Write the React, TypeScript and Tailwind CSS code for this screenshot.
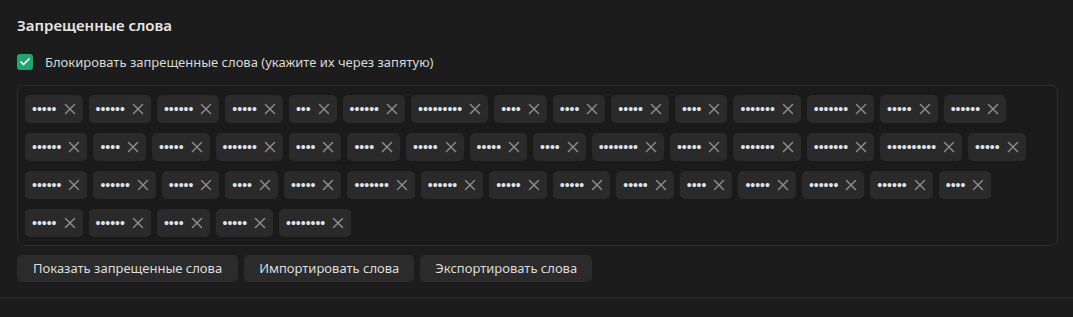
import { X, Check } from "lucide-react";

const rows: number[][] = [
  [5, 6, 6, 5, 3, 6, 9, 4, 4, 5, 4, 7, 7, 5, 6],
  [6, 4, 5, 7, 4, 4, 5, 5, 4, 8, 5, 7, 7, 10, 5],
  [6, 6, 5, 4, 5, 7, 6, 5, 5, 5, 4, 5, 6, 6, 4],
  [5, 6, 4, 5, 8],
];

function WordChip({ length }: { length: number }) {
  return (
    <div className="h-[28px] flex items-center gap-[8px] pl-[7px] pr-[8px] rounded-[5px] bg-[#2a2a2a]">
      <span className="text-[14px] leading-none text-[#dde3ee] font-['Liberation_Sans',sans-serif]">
        {"•".repeat(length)}
      </span>
      <X size={18} strokeWidth={2} className="text-[#8a8a8a] -mx-[4px]" />
    </div>
  );
}

export default function App() {
  return (
    <div className="w-[1073px] h-[317px] bg-[#1c1c1c] font-['Noto_Sans',sans-serif] text-[#dcdcdc] overflow-hidden">
      <div className="px-[17px] pt-[14px] pb-[15px] border-b border-[#2a2a2a]">
        <h2 className="text-[15px] font-semibold text-[#e6e6e6] leading-[22px]">
          Запрещенные слова
        </h2>

        {/* Checkbox */}
        <label className="flex items-center gap-[12px] mt-[17px]">
          <span className="w-[16px] h-[16px] rounded-[3px] bg-[#21a46f] flex items-center justify-center">
            <Check size={12} strokeWidth={3.5} className="text-white" />
          </span>
          <span className="text-[13px] leading-[18px] text-[#d9d9d9]">
            Блокировать запрещенные слова (укажите их через запятую)
          </span>
        </label>

        {/* Words box */}
        <div className="mt-[14px] w-[1041px] rounded-[7px] border border-[#2f2f2f] bg-[#1a1a1a] px-[7px] pt-[9px] pb-[8px] flex flex-col gap-[10px]">
          {rows.map((row, i) => (
            <div key={i} className="flex gap-[6px]">
              {row.map((n, j) => (
                <WordChip key={j} length={n} />
              ))}
            </div>
          ))}
        </div>

        {/* Actions */}
        <div className="mt-[9px] flex gap-[6px]">
          <button className="h-[27px] px-[16px] rounded-[5px] bg-[#2b2b2b] text-[13px] text-[#dcdcdc]">
            Показать запрещенные слова
          </button>
          <button className="h-[27px] px-[15px] rounded-[5px] bg-[#2b2b2b] text-[13px] text-[#dcdcdc]">
            Импортировать слова
          </button>
          <button className="h-[27px] px-[15px] rounded-[5px] bg-[#2b2b2b] text-[13px] text-[#dcdcdc]">
            Экспортировать слова
          </button>
        </div>
      </div>
    </div>
  );
}
